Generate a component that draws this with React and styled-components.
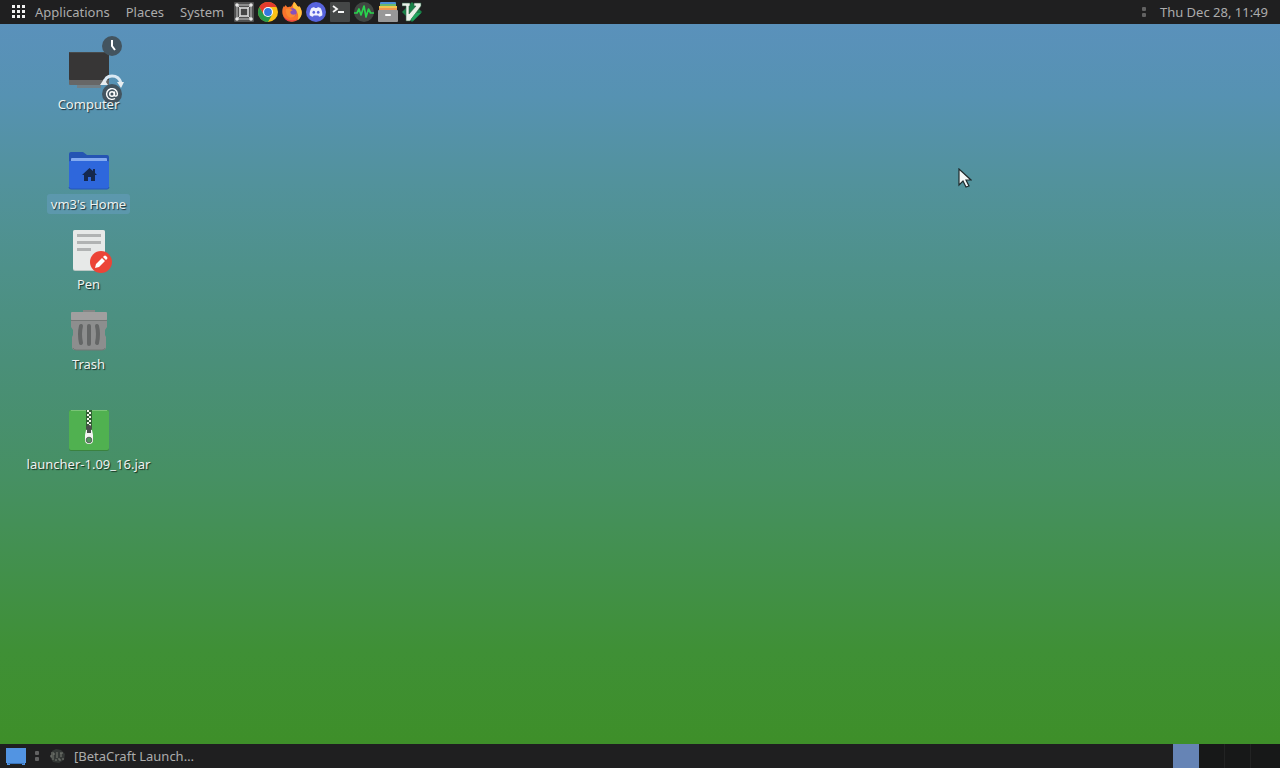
import React from "react";
import styled, { createGlobalStyle } from "styled-components";

const GlobalStyle = createGlobalStyle`
  * { box-sizing: border-box; }
  body {
    margin: 0;
    font-family: "Noto Sans", "Open Sans", sans-serif;
    font-size: 13px;
    line-height: 20px;
  }
  button { font: inherit; color: inherit; border: 0; padding: 0; background: none; }
  svg { display: block; }
`;

const Desktop = styled.div`
  display: flex;
  flex-direction: column;
  min-height: 100vh;
  position: relative;
`;

const Panel = styled.header`
  display: flex;
  align-items: center;
  height: 24px;
  background: #1f1f20;
  color: #acacac;
`;

const MenuBar = styled.nav`
  display: flex;
  align-items: center;
  padding-left: 11px;
  gap: 16px;
`;

const MenuButton = styled.button`
  display: flex;
  align-items: center;
  gap: 9px;
  white-space: nowrap;
`;

const Launchers = styled.div`
  display: flex;
  gap: 4px;
  padding-left: 10px;
`;

const LauncherButton = styled.button`
  width: 20px;
  height: 20px;
`;

const Spacer = styled.div`
  flex: 1;
`;

const Clock = styled.button`
  padding: 0 12px 0 14px;
  white-space: nowrap;
`;

const Workspace = styled.main`
  flex: 1;
  padding: 22px 0;
  background: linear-gradient(
    to bottom,
    #5a91bb 0%,
    #5692b2 10%,
    #52929c 22%,
    #4e918a 34%,
    #4a8f79 47%,
    #469063 63%,
    #42904b 76%,
    #3f9036 87%,
    #3e8f29 100%
  );
`;

const IconColumn = styled.div`
  display: flex;
  flex-direction: column;
  gap: 32px;
  width: 177px;
`;

const IconGroup = styled.div`
  display: flex;
  flex-direction: column;
  gap: 12px;
`;

const DesktopItem = styled.button`
  position: relative;
  display: flex;
  flex-direction: column;
  align-items: center;
  color: #edf3f1;
`;

const ItemLabel = styled.span`
  position: relative;
  padding: 0 4px;
  border-radius: 3px;
  white-space: nowrap;
  text-shadow: 1px 1px 1px rgba(0, 0, 0, 0.7);
  background: ${(p) => (p.$selected ? "rgba(98, 155, 184, 0.65)" : "transparent")};
`;

const Badges = styled.svg`
  position: absolute;
  left: 100px;
  top: -12px;
`;

const Pointer = styled.svg`
  position: absolute;
  left: 75%;
  top: 22%;
  margin: -1px 0 0 -2px;
`;

const ShowDesktop = styled.button`
  padding: 0 9px 0 6px;
`;

const Task = styled.button`
  display: flex;
  align-items: center;
  gap: 8px;
  padding-left: 10px;
  white-space: nowrap;
`;

const Switcher = styled.div`
  display: flex;
  align-self: stretch;
`;

const WorkspaceButton = styled.button`
  width: 26px;
  background: ${(p) => (p.$active ? "#6684b5" : "#171818")};
  border-right: 1px solid ${(p) => (p.$active ? "#6684b5" : "#222323")};

  &:last-child { width: 29px; border-right: 0; }
`;

const Handle = () => (
  <svg width="4" height="12" viewBox="0 0 4 12" fill="#626262">
    <rect y="1" width="4" height="4" rx="1" />
    <rect y="7" width="4" height="4" rx="1" />
  </svg>
);

const GridIcon = () => (
  <svg width="15" height="14" viewBox="0 0 15 14" fill="#f1f1f1">
    {[0, 5, 10].map((y) =>
      [1, 6, 11].map((x) => <rect key={`${x}-${y}`} x={x} y={y} width="3" height="3" />)
    )}
  </svg>
);

const Glyph = ({ children }) => (
  <svg width="20" height="20" viewBox="0 0 20 20">{children}</svg>
);

const launchers = [
  {
    name: "Screenshot region",
    art: (
      <>
        <rect width="20" height="20" rx="1" fill="#505050" />
        <path d="M3 3 7 7M17 3l-4 4M3 17l4-4M17 17l-4-4M4 3h12M4 17h12M3 4v12M17 4v12" stroke="#c8c8c8" strokeWidth="1" />
        <rect x="6" y="6" width="8" height="8" fill="#454545" stroke="#e2e2e2" strokeWidth="1.5" />
        <g fill="#e8e8e8"><circle cx="3" cy="3" r="1.8" /><circle cx="17" cy="3" r="1.8" /><circle cx="3" cy="17" r="1.8" /><circle cx="17" cy="17" r="1.8" /></g>
      </>
    ),
  },
  {
    name: "Chrome",
    art: (
      <>
        <circle cx="10" cy="10" r="10" fill="#fbc116" />
        <path d="M10 10 1.34 5A10 10 0 0 1 18.66 5H10Z" fill="#e33b2e" />
        <path d="M1.34 5 5.67 12.5 10 10V5Z" fill="#e33b2e" />
        <path d="M1.34 5A10 10 0 0 0 10 20l4.33-7.5H5.67Z" fill="#269a4c" />
        <circle cx="10" cy="10" r="5" fill="#fff" />
        <circle cx="10" cy="10" r="3.9" fill="#3478df" />
      </>
    ),
  },
  {
    name: "Firefox",
    art: (
      <>
        <path d="M3.5 3C4.5 4 5 5 6 5.2 7 4.6 8 4.7 9 4.8L12 0C14 1.5 14.5 3 15.5 4.2 16 4.7 17 5 17.4 4.2 19.5 7 20.2 10 19.4 13A9.8 9.8 0 0 1 .5 12C-.1 8.5.6 5.8 2 4.1L2.7 5Z" fill="#fa742b" />
        <path d="M12 0C14 1.5 14.5 3 15.5 4.2c.5.5 1.5.8 1.9 0C19.5 7 20.2 10 19.4 13c-.5 2-2 4-3.8 5.2C17 14 16 10 12.8 7.7 10.5 6 10.5 2.8 12 0Z" fill="#ffc13d" />
        <path d="M1.2 14C4 18 10 20 15.5 17.2 12 20.5 4 20.7 1.2 14Z" fill="#e9344c" />
        <circle cx="10.5" cy="10.5" r="4.2" fill="#8651bc" />
        <path d="M4 7C7 5.6 9.5 7 10.7 8.5 8.7 8.3 8 9.8 8.5 11 9.2 13 12 13.1 13.8 12 13 16 7 17 5 13.2 3.8 11 3.5 8.5 4 7Z" fill="#fb8931" />
      </>
    ),
  },
  {
    name: "Discord",
    art: (
      <>
        <circle cx="10" cy="10" r="10" fill="#5763dd" />
        <path d="M5.5 6 8.2 5l.6 1h2.4l.6-1 2.7 1c1.3 2 2 4.4 1.9 7.2-1 .9-2.1 1.4-3.3 1.6l-.8-1.3H7.7l-.8 1.3c-1.2-.2-2.3-.7-3.3-1.6C3.5 10.4 4.2 8 5.5 6Z" fill="#eff0ff" />
        <ellipse cx="7.8" cy="10.3" rx="1.3" ry="1.5" fill="#5763dd" />
        <ellipse cx="12.2" cy="10.3" rx="1.3" ry="1.5" fill="#5763dd" />
      </>
    ),
  },
  {
    name: "Terminal",
    art: (
      <>
        <rect width="20" height="20" rx="1" fill="#454747" />
        <path d="m3 4 4 3-4 3M8 10h6" fill="none" stroke="#f5f5f5" strokeWidth="1.8" />
      </>
    ),
  },
  {
    name: "System monitor",
    art: (
      <>
        <circle cx="10" cy="10" r="10" fill="#414642" />
        <path d="M0 11h3l2-4 2 6 3-9 2 11 2.5-8 2 4H20" fill="none" stroke="#29d44e" strokeWidth="1.7" strokeLinejoin="round" />
      </>
    ),
  },
  {
    name: "Files",
    art: (
      <>
        <rect x="2" y="0" width="16" height="5" rx="1" fill="#4c8fd7" />
        <rect x="2" y="2" width="16" height="4" fill="#69b86e" />
        <rect x="1" y="4" width="18" height="4" fill="#f0c44c" />
        <rect x="1" y="6" width="18" height="3" fill="#ed9550" />
        <rect y="8" width="20" height="12" rx="1" fill="#989898" />
        <rect x="7" y="12" width="6" height="2" rx="1" fill="#fff" />
      </>
    ),
  },
  {
    name: "Vim",
    art: (
      <>
        <path d="m10 0 10 10-10 10L0 10Z" fill="#178348" />
        <path d="M0 1h8v3H7v8l7-8h-2V1h7v3L8 19H4V4H0Z" fill="#e9f0e8" stroke="#315f43" strokeWidth=".6" />
        <path d="M14 11h5l-8 8-2-2Z" fill="#21a45e" />
      </>
    ),
  },
];

const Frame = ({ children }) => (
  <svg width="48" height="48" viewBox="0 0 48 48">{children}</svg>
);

const ComputerArt = () => (
  <Frame>
    <rect x="12" y="39" width="24" height="3" fill="#728087" />
    <rect x="4" y="6" width="40" height="33" rx="1" fill="#676767" />
    <rect x="4" y="6" width="40" height="28" rx="1" fill="#373636" />
    <path d="M5 6.5h38" stroke="#484a4a" />
  </Frame>
);

const HomeArt = () => (
  <Frame>
    <path d="M4 8a2 2 0 0 1 2-2h12l4 3h20a2 2 0 0 1 2 2v10H4Z" fill="#2554b3" />
    <path d="M6 15v-2q0-1 1-1h34q1 0 1 1v3H6Z" fill="#83aaf0" />
    <path d="M4 16q0-1 1-1h38q1 0 1 1v25q0 2-2 2H6q-2 0-2-2Z" fill="#2e67dc" />
    <path d="M4 41q0 2 2 2h36q2 0 2-2" fill="none" stroke="#2556b7" />
    <path d="m24.5 22-7.5 7h2v6h4v-4h3v4h4v-6h2l-2-2v-4h-2v2Z" fill="#15284f" />
  </Frame>
);

const PenArt = () => (
  <Frame>
    <rect x="8" y="4" width="32" height="41" rx="2" fill="#bcc8c5" />
    <rect x="8" y="4" width="32" height="40" rx="2" fill="#e7e9e8" />
    <path d="M12 9.5h24M12 16.5h24M12 23.5h14" stroke="#b1b3b3" strokeWidth="3" />
    <circle cx="36" cy="36" r="11" fill="#ec4437" />
    <path d="m30 42 1-4 6-6 3 3-6 6ZM38 31l1-1q1-1 2 0l1 1q1 1 0 2l-1 1Z" fill="#fff" />
  </Frame>
);

const TrashArt = () => (
  <Frame>
    <path d="M18 4h12v4H18Z" fill="#858786" />
    <path d="M6 13h36v8l-2 3v5l1 2v10q0 3-3 3H10q-3 0-3-3V31l1-2v-5l-2-3Z" fill="#8d8e8e" />
    <rect x="6" y="6" width="36" height="8" rx="1" fill="#a09f9f" />
    <path d="M6 14.5h36" stroke="#737675" />
    <path d="M16 20q-2 8 0 17M24 20v18M32 20q2 8 0 17" fill="none" stroke="#646666" strokeWidth="4" strokeLinecap="round" />
    <path d="M8 42q1 2 3 2h26q3 0 3-2" fill="none" stroke="#727675" />
  </Frame>
);

const JarArt = () => (
  <Frame>
    <rect x="4" y="4" width="40" height="41" rx="2" fill="#3a823f" />
    <rect x="4" y="4" width="40" height="40" rx="2" fill="#50b150" />
    <path d="M6 4.5h36" stroke="#7ac477" />
    <rect x="21" y="4" width="6" height="19" fill="#315f34" />
    {[4, 8, 12, 16].map((y) => (
      <path key={y} d={`M22 ${y}h2v2h-2ZM24 ${y + 2}h2v2h-2Z`} fill="#f5f6eb" />
    ))}
    <path d="M21 24h6l1 5v5a4 4 0 0 1-8 0v-5Z" fill="#f4f4f1" />
    <path d="M21 23q0-4 3-4t3 4l-1 1v3h-4v-3Z" fill="#4c4e4c" />
    <circle cx="24" cy="34" r="2.8" fill="#50955a" stroke="#59635b" />
  </Frame>
);

const ComputerBadges = () => (
  <Badges width="26" height="70" viewBox="0 0 26 70">
    <circle cx="12" cy="12" r="10" fill="#43545f" />
    <path d="M12 6v6l3 4" fill="none" stroke="#fff" strokeWidth="2" />
    <path d="M4 50q1-8 8-8t9 7" fill="none" stroke="#d9e8f3" strokeWidth="3" />
    <path d="m0 51 4-6 4 6ZM17 48h7l-3 6Z" fill="#e8edf0" />
    <circle cx="12" cy="60" r="10" fill="#43545f" />
    <circle cx="12" cy="60" r="2.3" fill="none" stroke="#fff" strokeWidth="1.4" />
    <path d="M14.5 57.5v3q0 2 1.5 1.6 1.5-.4 1.4-2.5A5.4 5.4 0 1 0 15 64.5" fill="none" stroke="#fff" strokeWidth="1.4" />
  </Badges>
);

const itemGroups = [
  [{ label: "Computer", Art: ComputerArt, Extra: ComputerBadges }],
  [
    { label: "vm3's Home", Art: HomeArt, selected: true },
    { label: "Pen", Art: PenArt },
    { label: "Trash", Art: TrashArt },
  ],
  [{ label: "launcher-1.09_16.jar", Art: JarArt }],
];

export default function App() {
  return (
    <Desktop>
      <GlobalStyle />
      <Panel>
        <MenuBar>
          <MenuButton><GridIcon />Applications</MenuButton>
          <MenuButton>Places</MenuButton>
          <MenuButton>System</MenuButton>
        </MenuBar>
        <Launchers>
          {launchers.map(({ name, art }) => (
            <LauncherButton key={name} aria-label={name}><Glyph>{art}</Glyph></LauncherButton>
          ))}
        </Launchers>
        <Spacer />
        <Handle />
        <Clock>Thu Dec 28, 11:49</Clock>
      </Panel>
      <Workspace>
        <IconColumn>
          {itemGroups.map((items) => (
            <IconGroup key={items[0].label}>
              {items.map(({ label, Art, Extra, selected }) => (
                <DesktopItem key={label}>
                  <Art />
                  {Extra && <Extra />}
                  <ItemLabel $selected={selected}>{label}</ItemLabel>
                </DesktopItem>
              ))}
            </IconGroup>
          ))}
        </IconColumn>
      </Workspace>
      <Panel as="footer">
        <ShowDesktop aria-label="Show desktop">
          <svg width="20" height="18" viewBox="0 0 20 18">
            <path d="M0 1h20v15h-1v2h-3v-1H4v1H1v-2H0Z" fill="#5294e2" />
            <path d="M2 16.5h16" stroke="#3873b9" />
          </svg>
        </ShowDesktop>
        <Handle />
        <Task>
          <svg width="17" height="16" viewBox="0 0 17 16">
            <path d="m3 3 4-2 5 1 4 4-1 6-5 3-6-1-3-5Z" fill="#343836" />
            <path d="M2 5h3v2H2v2h3M7 5h2M7 7h2M7 9h2M11 5h3M12 5v4M3 11h2M7 11v2M9 11h2v2M13 11h2" fill="none" stroke="#777b73" />
          </svg>
          [BetaCraft Launch…
        </Task>
        <Spacer />
        <Switcher>
          {[1, 2, 3, 4].map((n) => (
            <WorkspaceButton key={n} $active={n === 1} aria-label={`Workspace ${n}`} />
          ))}
        </Switcher>
      </Panel>
      <Pointer width="14" height="22" viewBox="0 0 14 22">
        <path d="M1 1v16l4-4 3 6 3-1-3-6h5Z" fill="#f5f8f8" stroke="#1f2a2c" strokeWidth="1.2" />
      </Pointer>
    </Desktop>
  );
}
